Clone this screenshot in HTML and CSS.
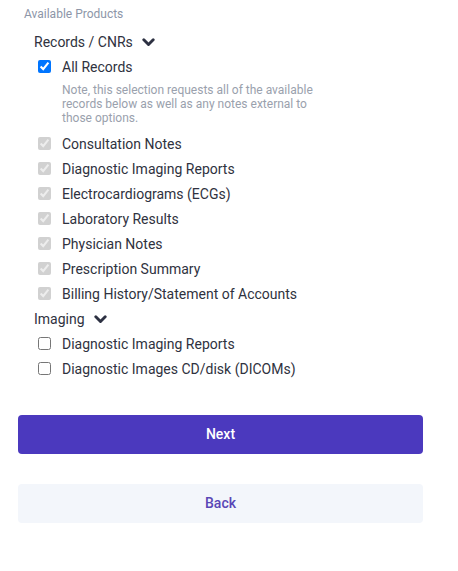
FILE: index.html
```html
<!DOCTYPE html>
<html lang="en">
<head>
<meta charset="utf-8">
<title>Available Products</title>
<link rel="stylesheet" href="styles.css">
</head>
<body>
<div class="page">
  <div class="caption">Available Products</div>

  <div class="group">
    <div class="group-head">
      <span>Records / CNRs</span>
      <svg class="chev" width="13" height="9" viewBox="0 0 13 9"><path d="M1.8 1.8 L6.5 6.5 L11.2 1.8" fill="none" stroke="#2d3142" stroke-width="2.9" stroke-linecap="round" stroke-linejoin="round"/></svg>
    </div>
    <label class="row"><input type="checkbox" checked><span>All Records</span></label>
    <p class="note">Note, this selection requests all of the available records below as well as any notes external to those options.</p>
    <label class="row"><input type="checkbox" checked disabled><span>Consultation Notes</span></label>
    <label class="row"><input type="checkbox" checked disabled><span>Diagnostic Imaging Reports</span></label>
    <label class="row"><input type="checkbox" checked disabled><span>Electrocardiograms (ECGs)</span></label>
    <label class="row"><input type="checkbox" checked disabled><span>Laboratory Results</span></label>
    <label class="row"><input type="checkbox" checked disabled><span>Physician Notes</span></label>
    <label class="row"><input type="checkbox" checked disabled><span>Prescription Summary</span></label>
    <label class="row"><input type="checkbox" checked disabled><span>Billing History/Statement of Accounts</span></label>
  </div>

  <div class="group">
    <div class="group-head">
      <span>Imaging</span>
      <svg class="chev" width="13" height="9" viewBox="0 0 13 9"><path d="M1.8 1.8 L6.5 6.5 L11.2 1.8" fill="none" stroke="#2d3142" stroke-width="2.9" stroke-linecap="round" stroke-linejoin="round"/></svg>
    </div>
    <label class="row"><input type="checkbox"><span>Diagnostic Imaging Reports</span></label>
    <label class="row"><input type="checkbox"><span>Diagnostic Images CD/disk (DICOMs)</span></label>
  </div>

  <div class="actions">
    <button class="btn btn-primary" type="button">Next</button>
    <button class="btn btn-secondary" type="button">Back</button>
  </div>
</div>
</body>
</html>
```

FILE: styles.css
```css
* { box-sizing: border-box; }

html, body {
  margin: 0;
  padding: 0;
  background: #ffffff;
}

body {
  font-family: Roboto, "Liberation Sans", Arial, sans-serif;
  color: #2f3240;
}

.page {
  width: 405px;
  margin-left: 18px;
  padding-top: 6px;
}

.caption {
  font-size: 12px;
  line-height: 16px;
  color: #8d96a8;
  padding-left: 6px;
  margin-bottom: 7px;
}

.group {
  padding-left: 16px;
}

.group-head {
  display: flex;
  align-items: center;
  height: 25px;
  font-size: 14px;
  color: #2f3240;
}

.chev {
  margin-left: 9px;
  margin-top: 1px;
}

.row {
  display: flex;
  align-items: center;
  height: 25px;
  font-size: 14px;
  color: #2f3240;
}

.row input {
  margin: 0 11px 0 4px;
  width: 13px;
  height: 13px;
}

.note {
  margin: 4px 0 6px 28px;
  width: 262px;
  font-size: 12px;
  line-height: 14px;
  color: #9aa1ad;
}

.actions {
  margin-top: 34px;
  display: flex;
  flex-direction: column;
  gap: 30px;
}

.btn {
  width: 405px;
  height: 39px;
  padding: 0 0 2px;
  border: 0;
  border-radius: 4px;
  font-family: Roboto, "Liberation Sans", Arial, sans-serif;
  font-size: 14px;
  font-weight: 500;
  cursor: pointer;
}

.btn-primary {
  background: #4b39be;
  color: #ffffff;
}

.btn-secondary {
  background: #f3f6fb;
  color: #5a47b6;
}
```
